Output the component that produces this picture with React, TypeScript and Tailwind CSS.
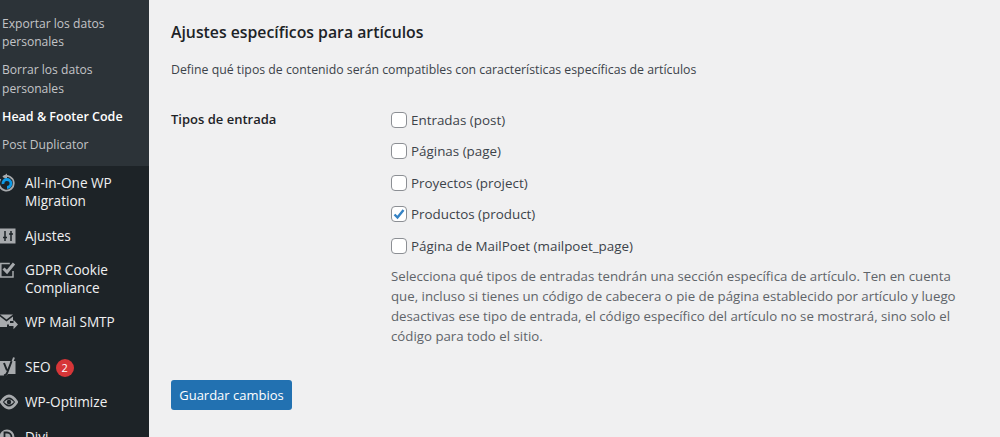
import React from 'react';

const font = "font-['Open_Sans','Noto_Sans',sans-serif]";

const submenu = [
  { label: <>Exportar los datos<br />personales</> },
  { label: <>Borrar los datos<br />personales</> },
  { label: 'Head & Footer Code', current: true },
  { label: 'Post Duplicator' },
];

const MigrationIcon = () => (
  <svg width="16" height="20" viewBox="0 0 16 20" fill="none" className="-ml-px">
    <path d="M4 3.800 A7.300 7.300 0 1 1 1.500 6" stroke="#a7aaad" strokeWidth="1.800" />
    <path d="M8 0.500 L3.500 3.800 L8 6.500z" fill="#a7aaad" />
    <path d="M4 11 A4 4 0 1 1 8 14.500" stroke="#0e9ae6" strokeWidth="2.800" />
  </svg>
);

const SettingsIcon = () => (
  <svg width="16" height="20" viewBox="0 0 16 20">
    <rect x="0" y="2.500" width="15.500" height="15" fill="#a7aaad" />
    <path d="M5 5v10M11 5v10" stroke="#1d2327" strokeWidth="1.500" />
    <path d="M3 11.500h4M9 8h4" stroke="#1d2327" strokeWidth="1.500" />
  </svg>
);

const CheckIcon = () => (
  <svg width="16" height="20" viewBox="0 0 16 20" fill="none">
    <path d="M13 11v6H0.800V3.500h9" stroke="#a7aaad" strokeWidth="1.500" />
    <path d="M3.500 8.500 L7 12 L14 3.500" stroke="#a7aaad" strokeWidth="3" />
  </svg>
);

const MailIcon = () => (
  <svg width="18" height="20" viewBox="0 0 18 20">
    <path d="M0 2.500h13L6.500 7.500z" fill="#a7aaad" />
    <path d="M0 4.500l6.500 5 6.500-5v4.500h-3v3.500H7V15H0z" fill="#a7aaad" />
    <path d="M9 11h4.500V7.800L18 12.500 13.500 17.200V14H9z" fill="#a7aaad" />
  </svg>
);

const YoastIcon = () => (
  <svg width="16" height="20" viewBox="0 0 16 20" fill="none">
    <path d="M0 4h15.500v13H8L6 18.500H0z" fill="#a7aaad" />
    <path d="M4 6l3 7.500M12 3L7.500 15Q6.500 18 4 18.500" stroke="#1d2327" strokeWidth="2" />
    <path d="M14 0.500L12.500 4.500" stroke="#a7aaad" strokeWidth="2" />
  </svg>
);

const OptimizeIcon = () => (
  <svg width="18" height="20" viewBox="0 0 18 20" fill="none">
    <path d="M1.200 10 Q9 -2 16.800 10 Q9 22 1.200 10z" stroke="#a7aaad" strokeWidth="2.800" />
    <path d="M4 10 Q9 4.500 14 10 Q9 15.500 4 10z" fill="#a7aaad" />
    <circle cx="9" cy="10" r="2.200" fill="#1d2327" />
  </svg>
);

const DiviIcon = () => (
  <svg width="16" height="20" viewBox="0 0 16 20" fill="none">
    <circle cx="7" cy="10" r="7.500" fill="#a7aaad" />
    <path d="M4.500 5.500h2.500a4.500 4.500 0 0 1 0 9H4.500z" fill="none" stroke="#1d2327" strokeWidth="1.800" />
  </svg>
);

const menu = [
  { icon: <MigrationIcon />, label: <>All-in-One WP<br />Migration</> },
  { icon: <SettingsIcon />, label: 'Ajustes' },
  { icon: <CheckIcon />, label: <>GDPR Cookie<br />Compliance</> },
  { icon: <MailIcon />, label: 'WP Mail SMTP', separator: true },
  { icon: <YoastIcon />, label: 'SEO', badge: '2' },
  { icon: <OptimizeIcon />, label: 'WP-Optimize' },
  { icon: <DiviIcon />, label: 'Divi' },
];

const postTypes = [
  { label: 'Entradas (post)' },
  { label: 'Páginas (page)' },
  { label: 'Proyectos (project)' },
  { label: 'Productos (product)', checked: true },
  { label: 'Página de MailPoet (mailpoet_page)' },
];

function Checkbox({ checked }: { checked?: boolean }) {
  return (
    <span className="flex h-4 w-4 shrink-0 items-center justify-center rounded-[4px] border border-[#8c8f94] bg-white">
      {checked && (
        <svg width="14" height="14" viewBox="0 0 14 14">
          <path d="M2.500 7.500 L5.500 10.500 L11.500 3" fill="none" stroke="#3582c4" strokeWidth="2.400" />
        </svg>
      )}
    </span>
  );
}

export default function App() {
  return (
    <div className={`flex h-[437px] w-[1000px] overflow-hidden bg-[#f0f0f1] ${font} text-[13px] leading-[18.2px] text-[#3c434a]`}>
      <aside className="h-[437px] w-[149px] shrink-0 overflow-hidden bg-[#1d2327]">
        <ul className="bg-[#2c3338] pt-[10px] pb-[7px] pl-[2px] text-[12.1px] text-[#c3c4c7]">
          {submenu.map((item, i) => (
            <li key={i} className={`whitespace-nowrap py-[5px] ${item.current ? 'text-[12.500px] font-semibold text-white' : ''}`}>
              {item.label}
            </li>
          ))}
        </ul>
        <ul className="text-[13.600px] text-[#f0f0f1]">
          {menu.map((item, i) => (
            <li key={i} className={item.separator ? 'mb-[11px]' : ''}>
              <div className="flex py-2">
                <span className="flex h-[18px] w-[25px] shrink-0 items-center">{item.icon}</span>
                <span className="whitespace-nowrap">{item.label}</span>
                {item.badge && (
                  <span className="ml-[5px] mt-[1px] flex h-[18px] w-[18px] items-center justify-center rounded-full bg-[#d63638] text-[11px] text-white">
                    {item.badge}
                  </span>
                )}
              </div>
            </li>
          ))}
        </ul>
      </aside>
      <main className="flex-1 pl-[22px] pt-[21px]">
        <h2 className="text-[15.800px] font-semibold leading-[22px] text-[#1d2327]">Ajustes específicos para artículos</h2>
        <p className="mt-[18px] text-[12.300px]">Define qué tipos de contenido serán compatibles con características específicas de artículos</p>
        <div className="mt-[31.500px] flex">
          <div className="-mt-px w-[220px] shrink-0 font-semibold text-[#1d2327]">Tipos de entrada</div>
          <div>
            <ul className="flex flex-col gap-[13.300px]">
              {postTypes.map((t) => (
                <li key={t.label} className="flex items-center gap-[4px] text-[13.400px]">
                  <Checkbox checked={t.checked} />
                  <span>{t.label}</span>
                </li>
              ))}
            </ul>
            <p className="mt-[11px] text-[13.250px] leading-[20px] text-[#5f6469]">
              Selecciona qué tipos de entradas tendrán una sección específica de artículo. Ten en cuenta<br />
              que, incluso si tienes un código de cabecera o pie de página establecido por artículo y luego<br />
              desactivas ese tipo de entrada, el código específico del artículo no se mostrará, sino solo el<br />
              código para todo el sitio.
            </p>
          </div>
        </div>
        <button className="mt-[34.500px] h-[30px] w-[121px] rounded-[3px] bg-[#2271b1] text-white">Guardar cambios</button>
      </main>
    </div>
  );
}
